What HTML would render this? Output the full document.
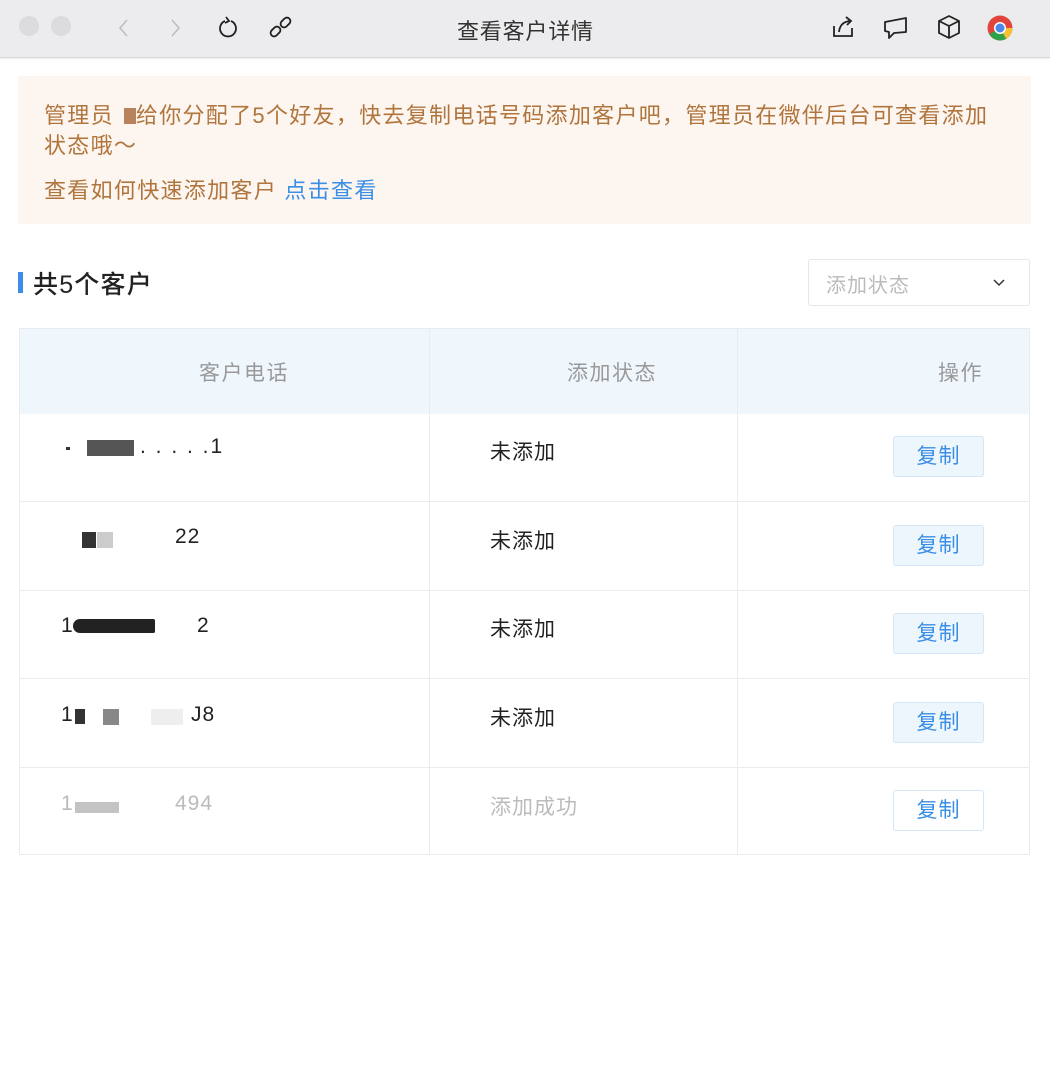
<!DOCTYPE html>
<html><head><meta charset="utf-8"><style>
*{margin:0;padding:0;box-sizing:border-box}
body{width:1050px;height:1074px;background:#fff;font-family:"Liberation Sans","Noto Sans CJK SC",sans-serif;position:relative;overflow:hidden}
.a{position:absolute;white-space:nowrap}
.top{position:absolute;left:0;top:0;width:1050px;height:58px;background:#ececee;border-bottom:1px solid #d8d8da;box-shadow:0 1px 2px rgba(0,0,0,.08)}
.dot{position:absolute;top:16px;width:20px;height:20px;border-radius:50%;background:#dcdcde}
.ban{position:absolute;left:18px;top:76px;width:1013px;height:148px;background:#fdf5ef}
.bt{color:#b0753d;font-size:22px;letter-spacing:1.3px}
.tbl{position:absolute;left:19px;top:328px;width:1011px;height:527px;border:1px solid #e8ecf0}
.hd{position:absolute;left:0;top:0;width:1009px;height:85px;background:#eff7fd}
.vl{position:absolute;top:0;width:1px;height:525px;background:#e8ecf0}
.hl{position:absolute;left:0;width:1009px;height:1px;background:#e8ecf0}
.ht{color:#999;font-size:21px;letter-spacing:1.5px}
.ct{color:#222;font-size:21px;letter-spacing:1px}
.btn{position:absolute;left:873px;width:91px;height:41px;border:1px solid #d4e6f7;border-radius:3px;background:#edf6fd;color:#3a8ee6;font-size:21px;letter-spacing:1px;text-align:center;line-height:39px}
.ph{position:absolute;height:16px}
</style></head><body>
<div class="top">
 <div class="dot" style="left:19px"></div><div class="dot" style="left:51px"></div>
 <svg class="a" style="left:115px;top:17px" width="18" height="22" viewBox="0 0 18 22"><path d="M12 3 L5 11 L12 19" fill="none" stroke="#bdbdbf" stroke-width="1.6"/></svg>
 <svg class="a" style="left:166px;top:17px" width="18" height="22" viewBox="0 0 18 22"><path d="M6 3 L13 11 L6 19" fill="none" stroke="#bdbdbf" stroke-width="1.6"/></svg>
 <svg class="a" style="left:216px;top:15px" width="24" height="26" viewBox="0 0 24 26"><path d="M9 6 A8 8 0 1 0 15 6" fill="none" stroke="#222" stroke-width="1.8"/><path d="M10 2 L13 6 L9 8" fill="none" stroke="#222" stroke-width="1.8"/></svg>
 <svg class="a" style="left:269px;top:15px" width="24" height="24" viewBox="0 0 24 24"><g fill="none" stroke="#222" stroke-width="1.8"><rect x="3" y="11" width="7" height="11" rx="3.5" transform="rotate(45 6.5 16.5)"/><rect x="13" y="2" width="7" height="11" rx="3.5" transform="rotate(45 16.5 7.5)"/></g></svg>
 <div class="a" style="left:457px;top:14px;font-size:22px;color:#333;letter-spacing:0.8px">查看客户详情</div>
 <svg class="a" style="left:830px;top:14px" width="26" height="26" viewBox="0 0 26 26"><g fill="none" stroke="#222" stroke-width="1.8"><path d="M4 12 V22 H22 V14"/><path d="M9 18 Q10 8 20 7"/><path d="M16 3 L21 7 L17 11"/></g></svg>
 <svg class="a" style="left:882px;top:16px" width="28" height="24" viewBox="0 0 28 24"><path d="M3 6 L24 2 V16 L12 17 L7 22 L7 16 L3 15 Z" fill="none" stroke="#222" stroke-width="1.8" stroke-linejoin="round"/></svg>
 <svg class="a" style="left:937px;top:14px" width="24" height="26" viewBox="0 0 24 26"><g fill="none" stroke="#222" stroke-width="1.8" stroke-linejoin="round"><path d="M12 2 L22 7 V19 L12 24 L2 19 V7 Z"/><path d="M2 7 L12 12 L22 7 M12 12 V24"/></g></svg>
 <svg class="a" style="left:987px;top:15px" width="26" height="26" viewBox="0 0 26 26"><circle cx="13" cy="13" r="12.5" fill="#e0443a"/><path d="M13 13 L2.2 19.2 A12.5 12.5 0 0 0 19.2 23.8 Z" fill="#2ea24b"/><path d="M13 13 L19.2 23.8 A12.5 12.5 0 0 0 25.5 13 L13 13" fill="#f5c331"/><circle cx="13" cy="13" r="6" fill="#fff"/><circle cx="13" cy="13" r="4.5" fill="#4a88e8"/></svg>
</div>

<div class="ban"></div>
<div class="a bt" style="left:44px;top:98px">管理员<span style="display:inline-block;width:10px"></span><span style="display:inline-block;width:12px;height:16px;background:#b8835a;vertical-align:-1px"></span>给你分配了5个好友，快去复制电话号码添加客户吧，管理员在微伴后台可查看添加</div>
<div class="a bt" style="left:44px;top:128px">状态哦～</div>
<div class="a bt" style="left:44px;top:173px">查看如何快速添加客户 <span style="color:#3a8ee6">点击查看</span></div>

<div class="a" style="left:18px;top:272px;width:5px;height:21px;background:#3a8ee6"></div>
<div class="a" style="left:33px;top:265px;font-size:25px;color:#222;font-weight:500;letter-spacing:1.2px">共5个客户</div>
<div class="a" style="left:808px;top:259px;width:222px;height:47px;border:1px solid #e4e7ec;border-radius:3px"></div>
<div class="a" style="left:826px;top:269px;font-size:20px;color:#bbb;letter-spacing:1px">添加状态</div>
<svg class="a" style="left:992px;top:278px" width="14" height="10" viewBox="0 0 14 10"><path d="M2 2 L7 7 L12 2" fill="none" stroke="#333" stroke-width="1.5"/></svg>

<div class="tbl">
 <div class="hd"></div>
 <div class="vl" style="left:409px"></div><div class="vl" style="left:717px"></div>
 <div class="hl" style="top:172px"></div><div class="hl" style="top:261px"></div><div class="hl" style="top:349px"></div><div class="hl" style="top:438px"></div>
 <div class="a ht" style="left:179px;top:28px">客户电话</div>
 <div class="a ht" style="left:547px;top:28px">添加状态</div>
 <div class="a ht" style="left:918px;top:28px">操作</div>

 <div class="ph" style="left:67px;top:111px;width:47px;background:#555"></div>
 <div class="a ct" style="left:120px;top:106px;letter-spacing:2px">. . . . .1</div>
 <div class="ph" style="left:46px;top:118px;width:4px;height:3px;background:#333"></div>
 <div class="a ct" style="left:470px;top:107px">未添加</div>
 <div class="btn" style="top:107px">复制</div>

 <div class="ph" style="left:62px;top:203px;width:14px;background:#333"></div>
 <div class="ph" style="left:77px;top:203px;width:16px;background:#ccc"></div>
 <div class="a ct" style="left:155px;top:196px">22</div>
 <div class="a ct" style="left:470px;top:196px">未添加</div>
 <div class="btn" style="top:196px">复制</div>

 <div class="a ct" style="left:41px;top:285px">1</div>
 <div class="ph" style="left:53px;top:290px;width:82px;height:14px;border-radius:8px 2px 2px 8px;background:#222"></div>
 <div class="a ct" style="left:177px;top:285px">2</div>
 <div class="a ct" style="left:470px;top:284px">未添加</div>
 <div class="btn" style="top:284px">复制</div>

 <div class="a ct" style="left:41px;top:374px">1</div>
 <div class="ph" style="left:55px;top:380px;width:10px;height:15px;background:#333"></div>
 <div class="ph" style="left:83px;top:380px;width:16px;background:#888"></div>
 <div class="ph" style="left:131px;top:380px;width:32px;background:#eee"></div>
 <div class="a ct" style="left:171px;top:374px">J8</div>
 <div class="a ct" style="left:470px;top:373px">未添加</div>
 <div class="btn" style="top:373px">复制</div>

 <div class="a ct" style="left:41px;top:463px;color:#bbb">1</div>
 <div class="ph" style="left:55px;top:473px;width:44px;height:11px;background:#c4c4c4"></div>
 <div class="a ct" style="left:155px;top:463px;color:#bbb">494</div>
 <div class="a ct" style="left:470px;top:462px;color:#bbb">添加成功</div>
 <div class="btn" style="top:461px;background:#fff">复制</div>
</div>
</body></html>
